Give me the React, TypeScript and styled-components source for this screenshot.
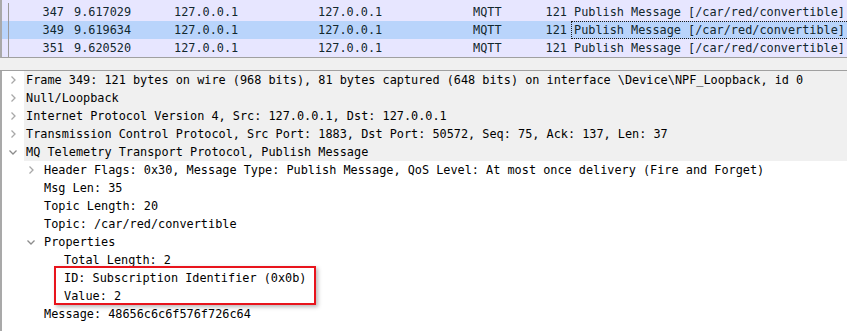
import styled, { createGlobalStyle } from "styled-components"

const GlobalStyle = createGlobalStyle`
  html, body {
    margin: 0;
    padding: 0;
    background: #ffffff;
  }
  body {
    font-family: "DejaVu Sans Mono", "Liberation Mono", monospace;
    font-size: 11.85px;
  }
`

const Window = styled.div`
  width: 847px;
  height: 331px;
  overflow: hidden;
  display: flex;
  flex-direction: column;
  background: #ffffff;
`

const PacketList = styled.div`
  height: 58px;
  padding-top: 3px;
  box-sizing: border-box;
  background: #e7e6ff;
  border-left: 2px solid #a9a9a9;
  border-bottom: 1px solid #a0a0a0;
  overflow: hidden;
`

const PacketRow = styled.div<{ $selected?: boolean }>`
  display: grid;
  grid-template-columns: 7px 55px 10px 100px 144px 155px 67px 27px 1fr;
  height: 18px;
  line-height: 18px;
  color: #12272e;
  background: ${(p) => (p.$selected ? "#b9d4fb" : "transparent")};
  white-space: nowrap;
`

const Cell = styled.div<{ $right?: boolean }>`
  overflow: hidden;
  text-align: ${(p) => (p.$right ? "right" : "left")};
`

const LeadCell = styled.div`
  border-right: 1px solid #9a9a9a;
`

const InfoCell = styled.div<{ $focused?: boolean }>`
  margin-left: 4px;
  padding-left: 2px;
  box-sizing: border-box;
  height: 18px;
  line-height: 16px;
  border: 1px dotted ${(p) => (p.$focused ? "#1a1a1a" : "transparent")};
  border-right: none;
`

const Splitter = styled.div`
  height: 12px;
  background: #f0f0f0;
  border-bottom: 1px solid #a0a0a0;
`

const Tree = styled.div`
  flex: 1;
  border-left: 2px solid #a9a9a9;
  color: #000000;
`

const TreeRow = styled.div<{ $level: number }>`
  display: flex;
  height: 18px;
  line-height: 18px;
  padding-left: ${(p) => Math.max(0, p.$level * 20 - 2)}px;
  white-space: nowrap;
`

const Toggle = styled.div`
  width: 22px;
  flex-shrink: 0;
  display: flex;
  align-items: center;
  justify-content: center;
`

const Label = styled.div<{ $top?: boolean }>`
  flex: 1;
  padding-left: 2px;
  background: ${(p) => (p.$top ? "#f0f0f0" : "transparent")};
`

const Highlight = styled.div`
  position: relative;
  &::after {
    content: "";
    position: absolute;
    left: 52px;
    top: -3px;
    width: 262px;
    height: 39px;
    box-sizing: border-box;
    border: 2px solid #e8141c;
    box-shadow: 2px 2px 4px rgba(0, 0, 0, 0.28);
    pointer-events: none;
  }
`

const Chevron = ({ open }: { open?: boolean }) =>
  open ? (
    <svg width="10" height="8" viewBox="0 0 10 8">
      <polyline points="1.5,2.5 5,6 8.5,2.5" fill="none" stroke="#8c8c8c" strokeWidth="1.3" />
    </svg>
  ) : (
    <svg width="8" height="10" viewBox="0 0 8 10">
      <polyline points="2.5,1.5 6,5 2.5,8.5" fill="none" stroke="#a8a8a8" strokeWidth="1.3" />
    </svg>
  )

type Node = { level: number; text: string; toggle?: "open" | "closed" }

const packets = [
  { no: "347", time: "9.617029" },
  { no: "349", time: "9.619634", selected: true },
  { no: "351", time: "9.620520" },
]

const nodesBefore: Node[] = [
  { level: 0, toggle: "closed", text: "Frame 349: 121 bytes on wire (968 bits), 81 bytes captured (648 bits) on interface \\Device\\NPF_Loopback, id 0" },
  { level: 0, toggle: "closed", text: "Null/Loopback" },
  { level: 0, toggle: "closed", text: "Internet Protocol Version 4, Src: 127.0.0.1, Dst: 127.0.0.1" },
  { level: 0, toggle: "closed", text: "Transmission Control Protocol, Src Port: 1883, Dst Port: 50572, Seq: 75, Ack: 137, Len: 37" },
  { level: 0, toggle: "open", text: "MQ Telemetry Transport Protocol, Publish Message" },
  { level: 1, toggle: "closed", text: "Header Flags: 0x30, Message Type: Publish Message, QoS Level: At most once delivery (Fire and Forget)" },
  { level: 1, text: "Msg Len: 35" },
  { level: 1, text: "Topic Length: 20" },
  { level: 1, text: "Topic: /car/red/convertible" },
  { level: 1, toggle: "open", text: "Properties" },
  { level: 2, text: "Total Length: 2" },
]

const highlighted: Node[] = [
  { level: 2, text: "ID: Subscription Identifier (0x0b)" },
  { level: 2, text: "Value: 2" },
]

const nodesAfter: Node[] = [{ level: 1, text: "Message: 48656c6c6f576f726c64" }]

const renderNode = (n: Node, i: number) => (
  <TreeRow key={i} $level={n.level}>
    <Toggle>{n.toggle && <Chevron open={n.toggle === "open"} />}</Toggle>
    <Label $top={n.level === 0}>{n.text}</Label>
  </TreeRow>
)

const App = () => {
  return (
    <Window>
      <GlobalStyle />
      <PacketList>
        {packets.map((p) => (
          <PacketRow key={p.no} $selected={p.selected}>
            <LeadCell />
            <Cell $right>{p.no}</Cell>
            <Cell />
            <Cell>{p.time}</Cell>
            <Cell>127.0.0.1</Cell>
            <Cell>127.0.0.1</Cell>
            <Cell>MQTT</Cell>
            <Cell $right>121</Cell>
            <InfoCell $focused={p.selected}>Publish Message [/car/red/convertible]</InfoCell>
          </PacketRow>
        ))}
      </PacketList>
      <Splitter />
      <Tree>
        {nodesBefore.map(renderNode)}
        <Highlight>{highlighted.map(renderNode)}</Highlight>
        {nodesAfter.map(renderNode)}
      </Tree>
    </Window>
  )
}

export default App
